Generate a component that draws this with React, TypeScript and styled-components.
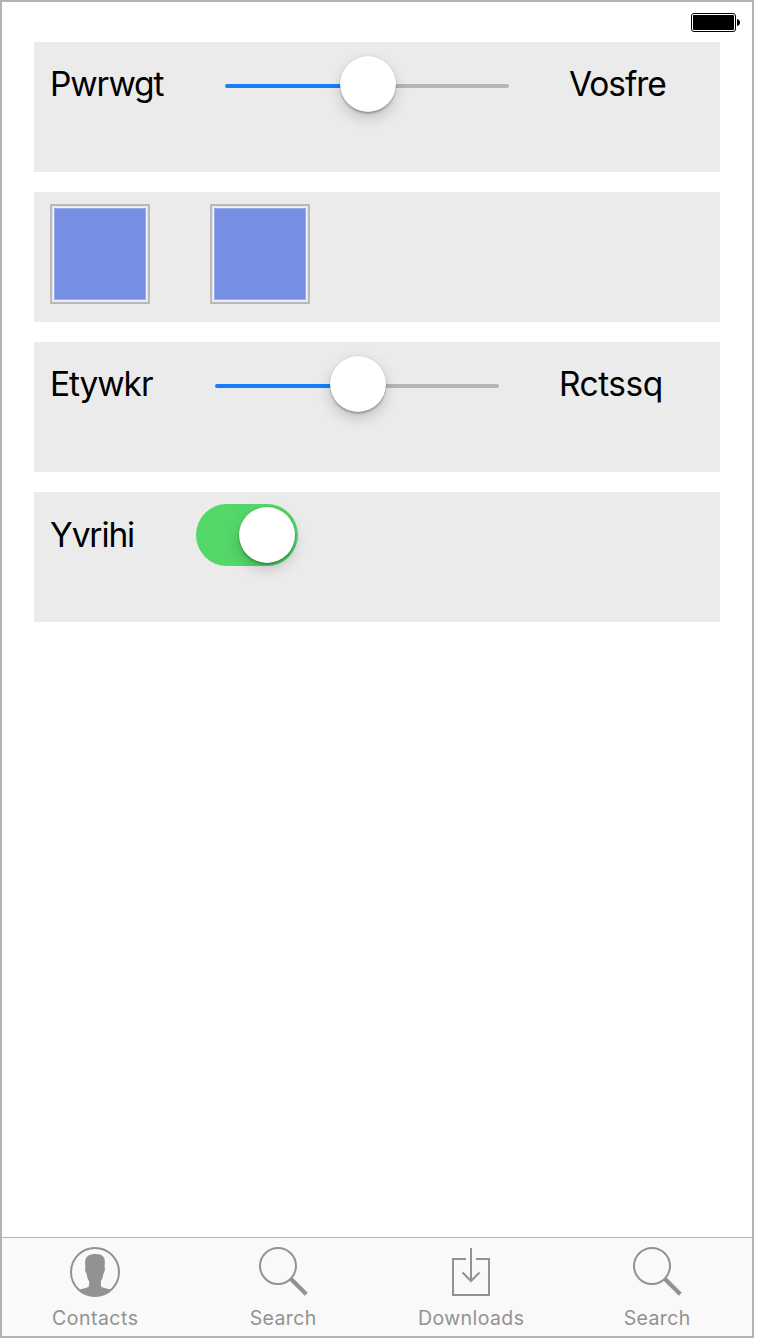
import React from "react";
import styled, { createGlobalStyle } from "styled-components";

const GlobalStyle = createGlobalStyle`
  body {
    margin: 0;
    background: #fff;
    font-family: Inter, "Liberation Sans", sans-serif;
  }
`;

const Screen = styled.div`
  box-sizing: border-box;
  width: 754px;
  height: 1338px;
  border: 2px solid #b2b2b2;
  background: #fff;
  display: flex;
  flex-direction: column;
`;

const StatusBar = styled.header`
  height: 40px;
  box-sizing: border-box;
  padding: 11px 12px 0 0;
  display: flex;
  justify-content: flex-end;
`;

const Content = styled.main`
  flex: 1;
  padding: 0 32px;
  display: flex;
  flex-direction: column;
  gap: 20px;
`;

const Panel = styled.section<{ $gap?: number }>`
  box-sizing: border-box;
  height: 130px;
  padding: 12px 16px;
  background: #ebebeb;
  display: flex;
  align-items: flex-start;
  gap: ${(p) => p.$gap ?? 0}px;
`;

const Label = styled.span<{ $width?: number; $tracking?: number; $drop?: number; $offset?: number }>`
  box-sizing: border-box;
  width: ${(p) => (p.$width ? `${p.$width}px` : "auto")};
  padding-top: ${(p) => p.$drop ?? 0}px;
  margin-left: ${(p) => p.$offset ?? 0}px;
  flex: none;
  font-size: 33.5px;
  line-height: 60px;
  letter-spacing: ${(p) => p.$tracking ?? -1.1}px;
  white-space: nowrap;
  color: #000;
`;

const SliderRoot = styled.div`
  width: 284px;
  height: 60px;
  flex: none;
  display: flex;
  align-items: center;
`;

const Track = styled.div<{ $filled?: boolean }>`
  flex: ${(p) => (p.$filled ? "0 0 116px" : "1")};
  height: 4px;
  margin-top: 4px;
  background: ${(p) => (p.$filled ? "#157efb" : "#b5b5b5")};
  border-radius: ${(p) => (p.$filled ? "2px 0 0 2px" : "0 2px 2px 0")};
`;

const Knob = styled.div`
  width: 56px;
  height: 56px;
  flex: none;
  border-radius: 50%;
  background: #fff;
  box-shadow: 0 0 0 0.5px rgba(0, 0, 0, 0.1), 0 2px 2px rgba(0, 0, 0, 0.22),
    0 6px 14px rgba(0, 0, 0, 0.18);
`;

const SliderKnob = styled(Knob)`
  z-index: 1;
  margin: 0 -1px;
`;

const Swatch = styled.div`
  box-sizing: border-box;
  width: 100px;
  height: 100px;
  padding: 1px;
  border: 2px solid #b9b9b9;
  background: #e3e5e8;
`;

const SwatchFill = styled.div`
  box-sizing: border-box;
  height: 100%;
  padding: 1px;
  background: #f0f3fb;
`;

const SwatchColor = styled.div`
  box-sizing: border-box;
  height: 100%;
  border: 1px solid #98a9e9;
  background: #768fe2;
`;

const Toggle = styled.div`
  box-sizing: border-box;
  width: 102px;
  height: 62px;
  padding: 3px;
  border-radius: 31px;
  background: #53d769;
  display: flex;
  justify-content: flex-end;
`;

const TabBar = styled.nav`
  box-sizing: border-box;
  height: 99px;
  border-top: 1px solid #b2b2b2;
  background: #f9f9f9;
  display: grid;
  grid-template-columns: 186px 190px 186px 186px;
`;

const Tab = styled.div`
  padding-top: 9px;
  display: flex;
  flex-direction: column;
  align-items: center;
  color: #929292;
`;

const TabLabel = styled.span<{ $tracking: number }>`
  margin-top: 9px;
  font-size: 19.5px;
  line-height: 24px;
  letter-spacing: ${(p) => p.$tracking}px;
  margin-right: ${(p) => -p.$tracking}px;
`;

const Icon = styled.svg`
  display: block;
  flex: none;
`;

function Slider() {
  return (
    <SliderRoot>
      <Track $filled />
      <SliderKnob />
      <Track />
    </SliderRoot>
  );
}

function ColorSwatch() {
  return (
    <Swatch>
      <SwatchFill>
        <SwatchColor />
      </SwatchFill>
    </Swatch>
  );
}

function Battery() {
  return (
    <Icon width="49" height="19" viewBox="0 0 49 19">
      <rect x="0.5" y="0.5" width="44" height="18" rx="2.5" fill="none" stroke="#000" />
      <rect x="2" y="2" width="41" height="15" rx="1" fill="#000" />
      <path d="M46 6q3 .6 3 3.5T46 13z" fill="#000" />
    </Icon>
  );
}

function ContactIcon() {
  return (
    <Icon width="50" height="50" viewBox="0 0 50 50">
      <circle cx="25" cy="25" r="24" fill="none" stroke="currentColor" strokeWidth="2" />
      <path
        d="M15.400 20C14.700 14.500 15 11 17.800 9 20 7.400 22.600 6.900 25.500 6.900c3.300 0 6 .7 7.600 2.500 2.200 2.400 1.800 6 1.500 10.600.7.800.1 6-1.300 6.700-.4 3.600-1.100 5.400-2.300 7.200-.3 2.200-.2 4.600.3 5.500.8 1.200 5.200 1.700 9.700 3.400C36.500 47 31.400 49.500 25 49.500S13.500 47 9.200 42.800c4.500-1.700 8.700-2.200 9.500-3.400.5-.9.600-3.300.3-5.500-1.200-1.800-1.900-3.600-2.300-7.200-1.400-.7-2-5.900-1.300-6.700z"
        fill="currentColor"
      />
    </Icon>
  );
}

function SearchIcon() {
  return (
    <Icon width="50" height="50" viewBox="0 0 50 50">
      <circle cx="20" cy="19" r="18" fill="none" stroke="currentColor" strokeWidth="2" />
      <path d="M32.500 31.500L48.300 47.300" fill="none" stroke="currentColor" strokeWidth="4.200" />
    </Icon>
  );
}

function DownloadIcon() {
  return (
    <Icon width="50" height="50" viewBox="0 0 50 50" fill="none" stroke="currentColor" strokeWidth="2">
      <path d="M20 12H7v36h36V12H30" />
      <path d="M25 1v32.500" />
      <path d="M16.500 25.500L25 34l8.500-8.500" />
    </Icon>
  );
}

const tabs = [
  { label: "Contacts", icon: <ContactIcon />, tracking: 0.5 },
  { label: "Search", icon: <SearchIcon />, tracking: 0.4 },
  { label: "Downloads", icon: <DownloadIcon />, tracking: 0.4 },
  { label: "Search", icon: <SearchIcon />, tracking: 0.4 },
];

export default function App() {
  return (
    <>
      <GlobalStyle />
      <Screen>
        <StatusBar>
          <Battery />
        </StatusBar>
        <Content>
          <Panel>
            <Label $width={175}>Pwrwgt</Label>
            <Slider />
            <Label $offset={60}>Vosfre</Label>
          </Panel>
          <Panel $gap={60}>
            <ColorSwatch />
            <ColorSwatch />
          </Panel>
          <Panel>
            <Label $width={165}>Etywkr</Label>
            <Slider />
            <Label $offset={60} $tracking={-0.5}>
              Rctssq
            </Label>
          </Panel>
          <Panel>
            <Label $width={146} $drop={1}>
              Yvrihi
            </Label>
            <Toggle>
              <Knob />
            </Toggle>
          </Panel>
        </Content>
        <TabBar>
          {tabs.map((tab, i) => (
            <Tab key={i}>
              {tab.icon}
              <TabLabel $tracking={tab.tracking}>{tab.label}</TabLabel>
            </Tab>
          ))}
        </TabBar>
      </Screen>
    </>
  );
}
